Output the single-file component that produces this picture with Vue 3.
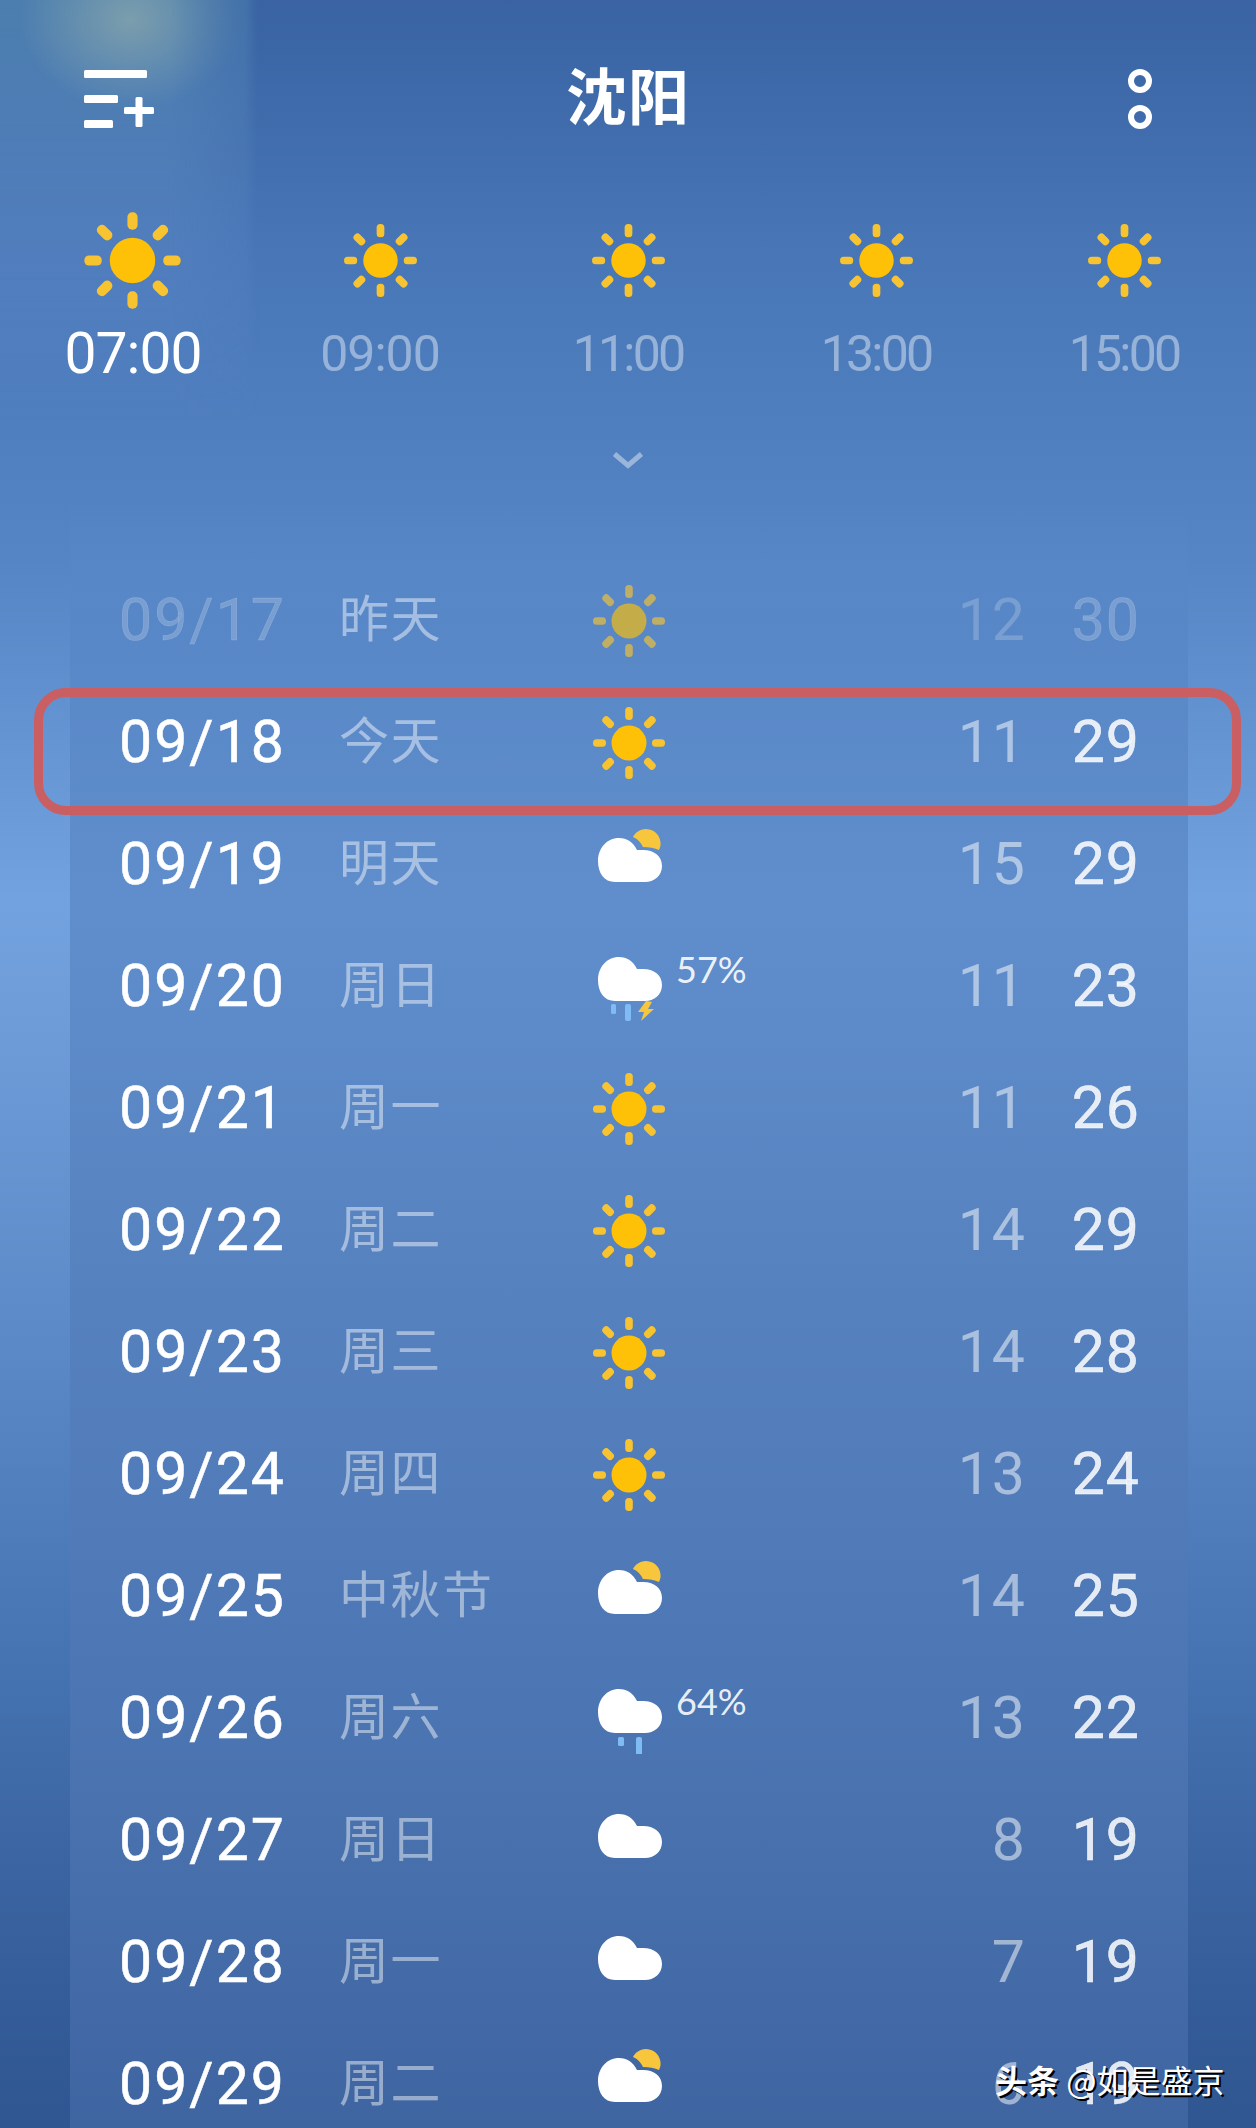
<script setup>
const hours = [
  { t: '07:00', now: true },
  { t: '09:00' },
  { t: '11:00', tight: true },
  { t: '13:00', tight: true },
  { t: '15:00', tight: true }
]
const rays = [0, 45, 90, 135, 180, 225, 270, 315]
const days = [
  { d: '09/17', w: '昨天', i: 'sun', lo: 12, hi: 30, past: true },
  { d: '09/18', w: '今天', i: 'sun', lo: 11, hi: 29 },
  { d: '09/19', w: '明天', i: 'partly', lo: 15, hi: 29 },
  { d: '09/20', w: '周日', i: 'storm', p: '57%', lo: 11, hi: 23 },
  { d: '09/21', w: '周一', i: 'sun', lo: 11, hi: 26 },
  { d: '09/22', w: '周二', i: 'sun', lo: 14, hi: 29 },
  { d: '09/23', w: '周三', i: 'sun', lo: 14, hi: 28 },
  { d: '09/24', w: '周四', i: 'sun', lo: 13, hi: 24 },
  { d: '09/25', w: '中秋节', i: 'partly', lo: 14, hi: 25 },
  { d: '09/26', w: '周六', i: 'rain', p: '64%', lo: 13, hi: 22 },
  { d: '09/27', w: '周日', i: 'cloud', lo: 8, hi: 19 },
  { d: '09/28', w: '周一', i: 'cloud', lo: 7, hi: 19 },
  { d: '09/29', w: '周二', i: 'partly', lo: 6, hi: 19 }
]
const cloud = 'M26 59C15 59 9 50 9 38C9 25 18 15 30 15C38 15 44 19 48 27C50 27 52 27 54 27C65 27 73 33 73 43C73 53 65 59 56 59Z'
</script>

<template>
  <div class="page">
    <div class="glare"></div>

    <header class="top">
      <svg class="menu" viewBox="0 0 70 58" width="70" height="58">
        <g fill="#fff">
          <rect x="0" y="0" width="63" height="8" rx="1.5" />
          <rect x="0" y="25" width="34" height="8" rx="1.5" />
          <rect x="0" y="50" width="29" height="8" rx="1.5" />
          <rect x="40" y="37" width="30" height="7" rx="1.5" />
          <rect x="51.5" y="27" width="7" height="30" rx="1.5" />
        </g>
      </svg>
      <h1 class="city">沈阳</h1>
      <svg class="more" viewBox="0 0 26 60" width="26" height="60">
        <g fill="none" stroke="#fff" stroke-width="6">
          <circle cx="13" cy="12" r="9" />
          <circle cx="13" cy="48" r="9" />
        </g>
      </svg>
    </header>

    <section class="hours">
      <div v-for="h in hours" :key="h.t" class="hour" :class="{ now: h.now, tight: h.tight }">
        <div class="hour-icon">
          <svg :width="h.now ? 107 : 81" :height="h.now ? 107 : 81" viewBox="0 0 80 80">
            <g fill="#f7c331">
              <rect v-for="r in rays" :key="r" x="36.2" y="4" width="7.6" height="13" rx="3.5" :transform="`rotate(${r} 40 40)`" />
            </g>
            <circle cx="40" cy="40" r="17" fill="#ffc107" />
          </svg>
        </div>
        <span class="hour-label">{{ h.t }}</span>
      </div>
    </section>

    <div class="chev">
      <svg viewBox="0 0 32 18" width="32" height="18">
        <path d="M2.5 3L16 14.5L29.5 3" fill="none" stroke="rgba(255,255,255,.42)" stroke-width="5" />
      </svg>
    </div>

    <section class="list">
      <div v-for="r in days" :key="r.d" class="row" :class="{ past: r.past }">
        <span class="date">{{ r.d }}</span>
        <span class="day">{{ r.w }}</span>
        <span class="icon">
          <svg v-if="r.i === 'sun'" class="sun" viewBox="0 0 80 80" width="80" height="80">
            <g fill="#f7c331">
              <rect v-for="a in rays" :key="a" x="36.2" y="4" width="7.6" height="13" rx="3.5" :transform="`rotate(${a} 40 40)`" />
            </g>
            <circle cx="40" cy="40" r="17.5" fill="#ffc107" />
          </svg>
          <svg v-else class="wx" :class="r.i" viewBox="0 0 80 80" width="80" height="80">
            <path v-if="r.i === 'partly'" d="M44 14A14.5 14.5 0 0 1 70 27C66 25 60 24 54 24C52 20 49 16 44 14Z" fill="#f8c63c" />
            <path :d="cloud" fill="#fff" />
            <template v-if="r.i === 'storm'">
              <rect x="22" y="62" width="5" height="10" rx="1.5" fill="#7fbcf4" />
              <rect x="36" y="62" width="6" height="17" rx="2" fill="#7fbcf4" />
              <path d="M57 59L49 70H55L52 79L65 67H59L63 60Z" fill="#f8c63c" />
            </template>
            <template v-if="r.i === 'rain'">
              <rect x="29" y="63" width="6" height="9" rx="1.5" fill="#7fbcf4" />
              <rect x="47" y="63" width="6" height="19" rx="2" fill="#7fbcf4" />
            </template>
          </svg>
        </span>
        <span class="pct">{{ r.p }}</span>
        <span class="lo">{{ r.lo }}</span>
        <span class="hi">{{ r.hi }}</span>
      </div>
    </section>

    <div class="today-box"></div>
    <div class="mark"><b>头条</b> @如是盛京</div>
  </div>
</template>

<style>
html, body { margin: 0; padding: 0; }
</style>

<style scoped>
.page {
  position: relative;
  width: 1256px;
  height: 2128px;
  overflow: hidden;
  font-family: "Roboto", "Noto Sans CJK SC", sans-serif;
  color: #fff;
  background: linear-gradient(180deg, #3963a3 0, #4a79ba 300px, #5685c5 560px, #72a2df 900px, #6c9ad7 1060px, #5a87c5 1360px, #4370ae 1700px, #345c98 2000px, #2f5690 2128px);
}
.glare {
  position: absolute;
  left: 0;
  top: 0;
  width: 258px;
  height: 420px;
  background:
    radial-gradient(ellipse 110px 90px at 130px 20px, rgba(170, 190, 170, .5), rgba(170, 190, 170, 0)),
    linear-gradient(180deg, rgba(100, 160, 190, .45), rgba(110, 150, 210, .25) 60%, rgba(110, 150, 210, 0));
  -webkit-mask-image: linear-gradient(90deg, #000 0, #000 170px, rgba(0, 0, 0, .55) 245px, transparent 258px);
  mask-image: linear-gradient(90deg, #000 0, #000 170px, rgba(0, 0, 0, .55) 245px, transparent 258px);
}
.top {
  position: relative;
  display: grid;
  grid-template-columns: 1fr auto 1fr;
  align-items: center;
  height: 196px;
  padding: 0 84px;
}
.menu { margin-top: 2px; }
.more { margin: 2px 19px 0 0; justify-self: end; }
.city {
  margin: -10px 0 0;
  font: 700 61px/1 "Noto Sans CJK SC", sans-serif;
  letter-spacing: 1px;
}
.hours {
  position: relative;
  display: grid;
  grid-template-columns: repeat(5, 248px);
  padding-left: 8px;
}
.hour { display: flex; flex-direction: column; align-items: center; }
.hour-icon {
  height: 128px;
  display: flex;
  align-items: center;
  justify-content: center;
}
.hour-label {
  font: 400 50px/60px "Roboto", sans-serif;
  letter-spacing: -1px;
  color: rgba(255, 255, 255, .42);
}
.hour.tight .hour-label { letter-spacing: -2.8px; }
.hour.now .hour-label {
  margin-left: 2px;
  font-size: 57px;
  letter-spacing: -1px;
  color: #fff;
}
.chev {
  position: relative;
  display: flex;
  justify-content: center;
  padding-top: 67px;
  height: 36px;
  margin-bottom: 13px;
}
.list {
  position: relative;
  margin: 0 68px 0 70px;
  padding: 58px 51px 0;
  height: 1628px;
  box-sizing: border-box;
  background: linear-gradient(180deg, rgba(90, 136, 200, 0) 0, #5887c7 120px, #608ecc 400px, #5681bf 800px, #4c76b3 1200px, #3f65a1 1628px);
}
.row {
  display: flex;
  align-items: center;
  height: 122px;
}
.date {
  width: 220px;
  margin: 0 0 0 -2px;
  font-size: 59px;
  letter-spacing: 2px;
  -webkit-text-stroke: .5px currentColor;
}
.day {
  width: 250px;
  margin-top: -8px;
  font: 400 50px/1 "Noto Sans CJK SC", sans-serif;
  letter-spacing: 1.5px;
  color: rgba(255, 255, 255, .46);
}
.icon { width: 80px; height: 80px; display: block; }
.icon svg { display: block; }
.sun { margin-top: 2px; }
.wx.storm, .wx.rain { margin-top: -3px; }
.pct {
  flex: 1;
  padding-left: 7px;
  align-self: flex-start;
  margin-top: 25px;
  font: 400 36px/40px "Lato", sans-serif;
  color: rgba(255, 255, 255, .9);
}
.lo {
  font-size: 59px;
  letter-spacing: 1px;
  color: rgba(255, 255, 255, .5);
}
.hi {
  width: 114px;
  margin-right: -3px;
  text-align: right;
  font-size: 59px;
  letter-spacing: 1px;
  color: rgba(255, 255, 255, .85);
  -webkit-text-stroke: .5px currentColor;
}
.row.past .date, .row.past .lo, .row.past .hi { color: rgba(255, 255, 255, .2); }
.row.past .sun { opacity: .65; }
.today-box {
  position: absolute;
  left: 34px;
  top: 688px;
  width: 1207px;
  height: 127px;
  box-sizing: border-box;
  border: 9px solid #c95f62;
  border-radius: 32px;
}
.mark {
  position: absolute;
  left: 995px;
  top: 2059px;
  font: 400 32px/40px "Noto Sans CJK SC", sans-serif;
  color: #fff;
  text-shadow: 2px 2px 0 #000;
  white-space: nowrap;
}
.mark b { font-weight: 700; }
</style>
